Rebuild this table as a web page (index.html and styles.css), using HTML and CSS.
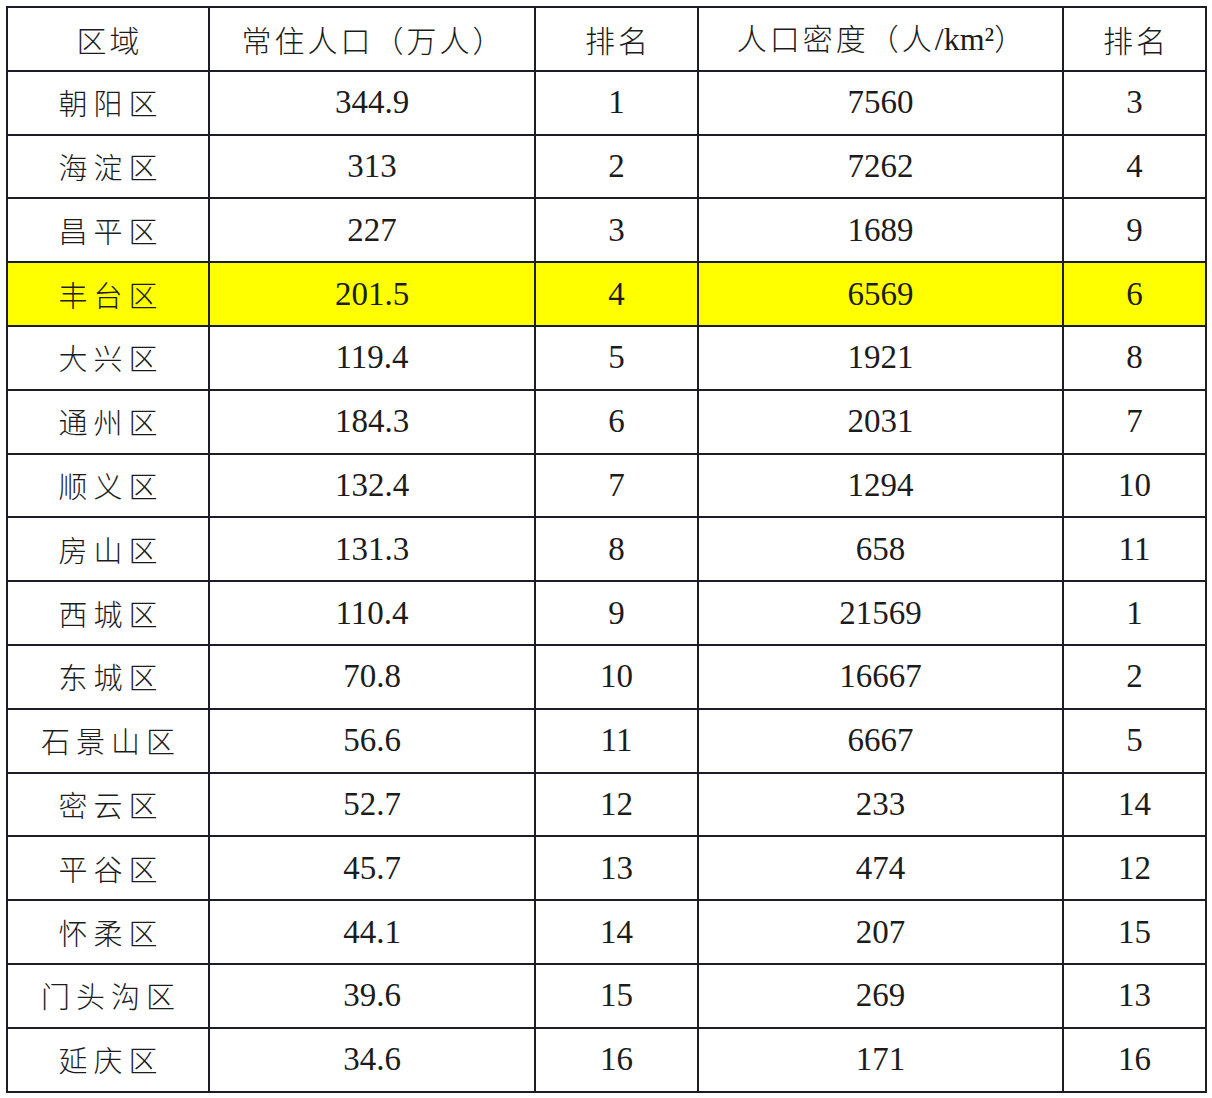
FILE: index.html
```html
<!DOCTYPE html>
<html lang="zh-CN">
<head>
<meta charset="utf-8">
<title>北京各区人口</title>
<link rel="stylesheet" href="styles.css">
</head>
<body>
<table class="pop">
  <colgroup>
    <col class="c1"><col class="c2"><col class="c3"><col class="c4"><col class="c5">
  </colgroup>
  <thead>
    <tr>
      <th>区域</th>
      <th>常住人口（万人）</th>
      <th>排名</th>
      <th>人口密度（人<span class="lat">/km²</span>）</th>
      <th>排名</th>
    </tr>
  </thead>
  <tbody>
    <tr><td class="name">朝阳区</td><td>344.9</td><td>1</td><td>7560</td><td>3</td></tr>
    <tr><td class="name">海淀区</td><td>313</td><td>2</td><td>7262</td><td>4</td></tr>
    <tr><td class="name">昌平区</td><td>227</td><td>3</td><td>1689</td><td>9</td></tr>
    <tr class="hl"><td class="name">丰台区</td><td>201.5</td><td>4</td><td>6569</td><td>6</td></tr>
    <tr><td class="name">大兴区</td><td>119.4</td><td>5</td><td>1921</td><td>8</td></tr>
    <tr><td class="name">通州区</td><td>184.3</td><td>6</td><td>2031</td><td>7</td></tr>
    <tr><td class="name">顺义区</td><td>132.4</td><td>7</td><td>1294</td><td>10</td></tr>
    <tr><td class="name">房山区</td><td>131.3</td><td>8</td><td>658</td><td>11</td></tr>
    <tr><td class="name">西城区</td><td>110.4</td><td>9</td><td>21569</td><td>1</td></tr>
    <tr><td class="name">东城区</td><td>70.8</td><td>10</td><td>16667</td><td>2</td></tr>
    <tr><td class="name">石景山区</td><td>56.6</td><td>11</td><td>6667</td><td>5</td></tr>
    <tr><td class="name">密云区</td><td>52.7</td><td>12</td><td>233</td><td>14</td></tr>
    <tr><td class="name">平谷区</td><td>45.7</td><td>13</td><td>474</td><td>12</td></tr>
    <tr><td class="name">怀柔区</td><td>44.1</td><td>14</td><td>207</td><td>15</td></tr>
    <tr><td class="name">门头沟区</td><td>39.6</td><td>15</td><td>269</td><td>13</td></tr>
    <tr><td class="name">延庆区</td><td>34.6</td><td>16</td><td>171</td><td>16</td></tr>
  </tbody>
</table>
</body>
</html>
```

FILE: styles.css
```css
html, body {
  margin: 0;
  padding: 0;
  background: #ffffff;
}

body {
  padding: 6px 0 0 6px;
}

.pop {
  border-collapse: collapse;
  width: 1199px;
  table-layout: fixed;
  color: #1c1c1c;
  font-family: "Liberation Serif", "Noto Sans CJK SC", serif;
  font-size: 33px;
}

.c1 { width: 202px; }
.c2 { width: 326px; }
.c3 { width: 163px; }
.c4 { width: 365px; }
.c5 { width: 143px; }

.pop th,
.pop td {
  border: 2px solid #1d1d28;
  height: 61.8px;
  padding: 0;
  text-align: center;
  vertical-align: middle;
  line-height: 1;
}

.pop th {
  font-family: "Noto Sans CJK SC", sans-serif;
  font-weight: 300;
  font-size: 30px;
  letter-spacing: 3px;
  text-indent: 3px;
}

.pop th .lat {
  font-family: "Liberation Serif", "Noto Sans CJK SC", serif;
  font-weight: 400;
  font-size: 32px;
  letter-spacing: 0;
}

.pop td.name {
  font-family: "Noto Sans CJK SC", sans-serif;
  font-weight: 300;
  font-size: 29px;
  letter-spacing: 6px;
  text-indent: 6px;
}

.pop tr.hl td {
  background: #ffff00;
}
```
